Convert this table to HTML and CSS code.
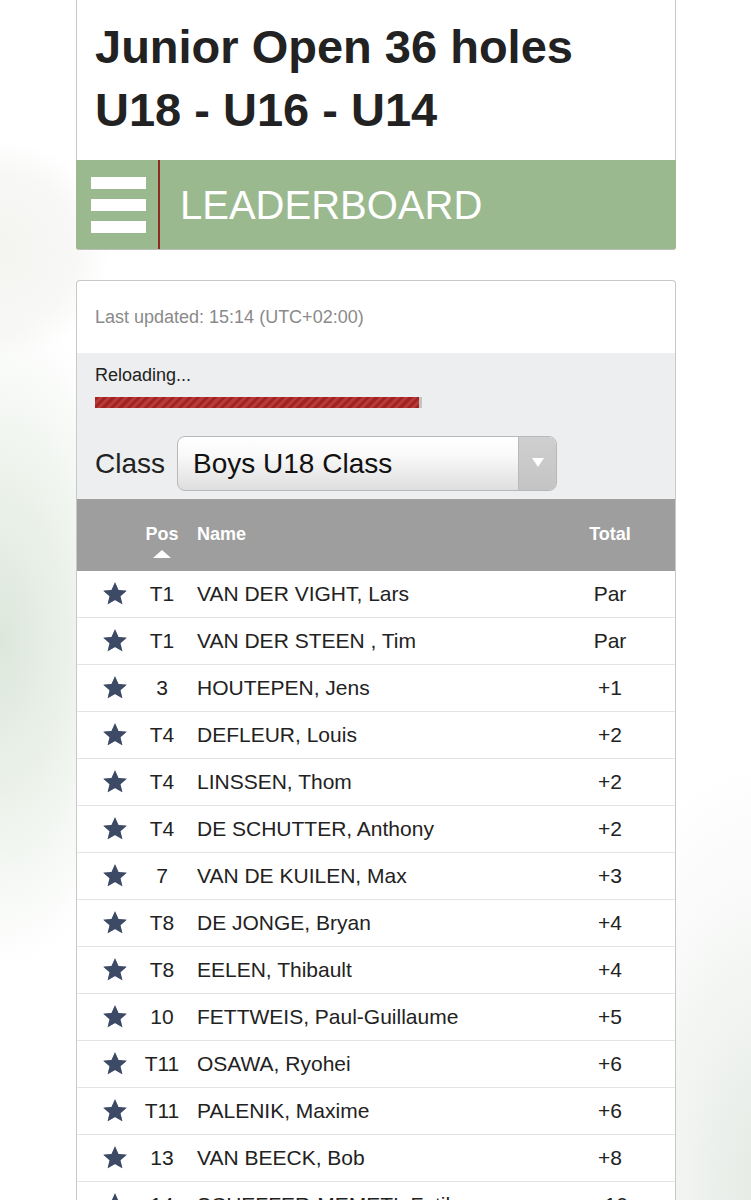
FILE: index.html
```html
<!DOCTYPE html>
<html lang="en">
<head>
<meta charset="utf-8">
<title>Junior Open 36 holes - Leaderboard</title>
<link rel="stylesheet" href="styles.css">
</head>
<body>
<div class="page">
  <header class="title-card">
    <h1 class="title">Junior Open 36 holes<br>U18 - U16 - U14</h1>
  </header>
  <nav class="navbar">
    <div class="menu-btn"><span></span><span></span><span></span></div>
    <div class="nav-title">LEADERBOARD</div>
  </nav>

  <section class="board">
    <div class="updated">Last updated: 15:14 (UTC+02:00)</div>
    <div class="controls">
      <div class="reloading">Reloading...</div>
      <div class="progress"><div class="progress-fill"></div></div>
      <div class="class-row">
        <span class="class-label">Class</span>
        <div class="select"><span class="select-text">Boys U18 Class</span><span class="select-arrow"></span></div>
      </div>
    </div>

    <div class="table">
      <div class="thead">
        <div></div>
        <div class="th pos">Pos<span class="sort"></span></div>
        <div class="th name">Name</div>
        <div class="th total">Total</div>
      </div>

      <div class="row"><svg class="star" viewBox="0 0 24 24"><path d="M12 1.2l3.2 7 7.6.7-5.8 5.1 1.8 7.5L12 17.6l-6.8 3.9 1.8-7.5L1.2 8.9l7.6-.7z"/></svg><div class="pos">T1</div><div class="name">VAN DER VIGHT, Lars</div><div class="total">Par</div></div>
      <div class="row"><svg class="star" viewBox="0 0 24 24"><path d="M12 1.2l3.2 7 7.6.7-5.8 5.1 1.8 7.5L12 17.6l-6.8 3.9 1.8-7.5L1.2 8.9l7.6-.7z"/></svg><div class="pos">T1</div><div class="name">VAN DER STEEN , Tim</div><div class="total">Par</div></div>
      <div class="row"><svg class="star" viewBox="0 0 24 24"><path d="M12 1.2l3.2 7 7.6.7-5.8 5.1 1.8 7.5L12 17.6l-6.8 3.9 1.8-7.5L1.2 8.9l7.6-.7z"/></svg><div class="pos">3</div><div class="name">HOUTEPEN, Jens</div><div class="total">+1</div></div>
      <div class="row"><svg class="star" viewBox="0 0 24 24"><path d="M12 1.2l3.2 7 7.6.7-5.8 5.1 1.8 7.5L12 17.6l-6.8 3.9 1.8-7.5L1.2 8.9l7.6-.7z"/></svg><div class="pos">T4</div><div class="name">DEFLEUR, Louis</div><div class="total">+2</div></div>
      <div class="row"><svg class="star" viewBox="0 0 24 24"><path d="M12 1.2l3.2 7 7.6.7-5.8 5.1 1.8 7.5L12 17.6l-6.8 3.9 1.8-7.5L1.2 8.9l7.6-.7z"/></svg><div class="pos">T4</div><div class="name">LINSSEN, Thom</div><div class="total">+2</div></div>
      <div class="row"><svg class="star" viewBox="0 0 24 24"><path d="M12 1.2l3.2 7 7.6.7-5.8 5.1 1.8 7.5L12 17.6l-6.8 3.9 1.8-7.5L1.2 8.9l7.6-.7z"/></svg><div class="pos">T4</div><div class="name">DE SCHUTTER, Anthony</div><div class="total">+2</div></div>
      <div class="row"><svg class="star" viewBox="0 0 24 24"><path d="M12 1.2l3.2 7 7.6.7-5.8 5.1 1.8 7.5L12 17.6l-6.8 3.9 1.8-7.5L1.2 8.9l7.6-.7z"/></svg><div class="pos">7</div><div class="name">VAN DE KUILEN, Max</div><div class="total">+3</div></div>
      <div class="row"><svg class="star" viewBox="0 0 24 24"><path d="M12 1.2l3.2 7 7.6.7-5.8 5.1 1.8 7.5L12 17.6l-6.8 3.9 1.8-7.5L1.2 8.9l7.6-.7z"/></svg><div class="pos">T8</div><div class="name">DE JONGE, Bryan</div><div class="total">+4</div></div>
      <div class="row"><svg class="star" viewBox="0 0 24 24"><path d="M12 1.2l3.2 7 7.6.7-5.8 5.1 1.8 7.5L12 17.6l-6.8 3.9 1.8-7.5L1.2 8.9l7.6-.7z"/></svg><div class="pos">T8</div><div class="name">EELEN, Thibault</div><div class="total">+4</div></div>
      <div class="row"><svg class="star" viewBox="0 0 24 24"><path d="M12 1.2l3.2 7 7.6.7-5.8 5.1 1.8 7.5L12 17.6l-6.8 3.9 1.8-7.5L1.2 8.9l7.6-.7z"/></svg><div class="pos">10</div><div class="name">FETTWEIS, Paul-Guillaume</div><div class="total">+5</div></div>
      <div class="row"><svg class="star" viewBox="0 0 24 24"><path d="M12 1.2l3.2 7 7.6.7-5.8 5.1 1.8 7.5L12 17.6l-6.8 3.9 1.8-7.5L1.2 8.9l7.6-.7z"/></svg><div class="pos">T11</div><div class="name">OSAWA, Ryohei</div><div class="total">+6</div></div>
      <div class="row"><svg class="star" viewBox="0 0 24 24"><path d="M12 1.2l3.2 7 7.6.7-5.8 5.1 1.8 7.5L12 17.6l-6.8 3.9 1.8-7.5L1.2 8.9l7.6-.7z"/></svg><div class="pos">T11</div><div class="name">PALENIK, Maxime</div><div class="total">+6</div></div>
      <div class="row"><svg class="star" viewBox="0 0 24 24"><path d="M12 1.2l3.2 7 7.6.7-5.8 5.1 1.8 7.5L12 17.6l-6.8 3.9 1.8-7.5L1.2 8.9l7.6-.7z"/></svg><div class="pos">13</div><div class="name">VAN BEECK, Bob</div><div class="total">+8</div></div>
      <div class="row"><svg class="star" viewBox="0 0 24 24"><path d="M12 1.2l3.2 7 7.6.7-5.8 5.1 1.8 7.5L12 17.6l-6.8 3.9 1.8-7.5L1.2 8.9l7.6-.7z"/></svg><div class="pos">14</div><div class="name">SCHEFFER-MEMETI, Fatih</div><div class="total">+10</div></div>
    </div>
  </section>
</div>
</body>
</html>
```
FILE: styles.css
```css
html, body {
  margin: 0;
  padding: 0;
}

body {
  font-family: "Liberation Sans", Arial, Helvetica, sans-serif;
  color: #222;
  background-color: #fff;
  background-image:
    radial-gradient(ellipse 150px 330px at 0 640px, rgba(214, 227, 212, 0.85) 0%, rgba(228, 236, 226, 0.6) 55%, rgba(255, 255, 255, 0) 100%),
    radial-gradient(ellipse 110px 110px at 0 250px, rgba(244, 244, 241, 1) 0%, rgba(246, 246, 244, 0.8) 70%, rgba(255, 255, 255, 0) 100%),
    radial-gradient(ellipse 190px 420px at 760px 1180px, rgba(226, 232, 226, 0.9) 0%, rgba(238, 241, 238, 0.5) 60%, rgba(255, 255, 255, 0) 100%);
  background-repeat: no-repeat;
}

.page {
  width: 600px;
  margin: 0 75px 0 76px;
}

/* ---- Title card ---- */
.title-card {
  background: #fff;
  border-left: 1px solid #c9c9c9;
  border-right: 1px solid #c9c9c9;
  padding: 15px 18px 19px;
}

.title {
  margin: 0;
  font-size: 47px;
  line-height: 63px;
  font-weight: bold;
  color: #222;
}

.navbar {
  display: flex;
  align-items: center;
  height: 89px;
  background: #9bb98f;
  border-bottom: 1px solid #b9bdb7;
  border-radius: 0 0 3px 3px;
}

.menu-btn {
  box-sizing: border-box;
  width: 84px;
  height: 100%;
  padding-left: 15px;
  border-right: 2px solid #8e2a20;
  display: flex;
  flex-direction: column;
  justify-content: center;
  gap: 10px;
}

.menu-btn span {
  display: block;
  width: 55px;
  height: 12px;
  background: #fff;
}

.nav-title {
  padding-left: 20px;
  font-size: 40px;
  color: #fff;
  line-height: 1;
}

/* ---- Leaderboard card ---- */
.board {
  margin-top: 30px;
  background: #fff;
  border: 1px solid #c8c8c8;
  border-bottom: none;
  border-radius: 4px 4px 0 0;
  overflow: hidden;
}

.updated {
  padding: 26px 18px 25px;
  font-size: 18px;
  line-height: 21px;
  color: #8a8a8a;
}

.controls {
  background: #eceeef;
  padding: 12px 18px 8px;
}

.reloading {
  font-size: 18px;
  line-height: 21px;
  color: #222;
}

.progress {
  margin-top: 11px;
  width: 327px;
  height: 11px;
  background: #c4c4c4;
}

.progress-fill {
  width: 324px;
  height: 100%;
  background: repeating-linear-gradient(-45deg, #a32222 0 3px, #b73a3a 3px 6px);
}

.class-row {
  margin-top: 28px;
  display: flex;
  align-items: center;
  gap: 12px;
}

.class-label {
  font-size: 28px;
  color: #222;
}

.select {
  box-sizing: border-box;
  width: 380px;
  height: 55px;
  border: 1px solid #b8b8b8;
  border-radius: 8px;
  background: linear-gradient(#ffffff 0%, #f9f9f9 35%, #dedede 100%);
  display: flex;
  overflow: hidden;
}

.select-text {
  flex: 1;
  padding-left: 15px;
  font-size: 28px;
  line-height: 53px;
  color: #111;
}

.select-arrow {
  width: 37px;
  background: linear-gradient(#cfcfcf, #c4c4c4);
  border-left: 1px solid #b9b9b9;
  display: flex;
  align-items: center;
  justify-content: center;
}

.select-arrow::after {
  content: "";
  width: 0;
  height: 0;
  border-left: 6px solid transparent;
  border-right: 6px solid transparent;
  border-top: 9px solid #fff;
  margin-top: -2px;
}

/* ---- Table ---- */
.thead,
.row {
  display: grid;
  grid-template-columns: 64px 42px 1fr 130px;
}

.thead {
  height: 72px;
  background: #9e9e9e;
  color: #fff;
  font-size: 18px;
  line-height: 21px;
  font-weight: bold;
}

.th {
  padding-top: 25px;
}

.thead .pos,
.thead .total {
  text-align: center;
}

.thead .name {
  padding-left: 14px;
}

.sort {
  display: block;
  width: 0;
  height: 0;
  margin: 5px auto 0;
  border-left: 9px solid transparent;
  border-right: 9px solid transparent;
  border-bottom: 8px solid #fff;
}

.row {
  height: 46px;
  align-items: center;
  border-bottom: 1px solid #e3e3e3;
  font-size: 21px;
  color: #222;
}

.star {
  width: 26px;
  height: 26px;
  margin-left: 25px;
  fill: #3c4a66;
  filter: drop-shadow(0 0 0.6px rgba(60, 74, 102, 0.6));
}

.row .pos {
  text-align: center;
}

.row .name {
  padding-left: 14px;
  white-space: nowrap;
}

.row .total {
  text-align: center;
}
```
